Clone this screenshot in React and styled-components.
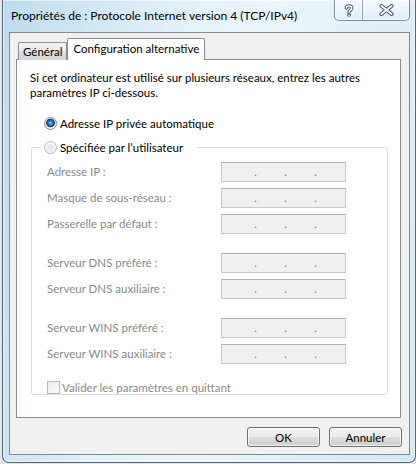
import React from "react";
import styled, { createGlobalStyle } from "styled-components";

const GlobalStyle = createGlobalStyle`
  html, body { margin: 0; padding: 0; }
  body {
    width: 416px;
    height: 464px;
    overflow: hidden;
    background: #dfe8ee;
    font-family: Lato, "Noto Sans", sans-serif;
    font-size: 12px;
    color: #000;
  }
  * { box-sizing: border-box; }
`;

const Window = styled.div`
  margin-left: 2px;
  width: 414px;
  height: 463px;
  border: 1px solid #59636d;
  border-top: none;
  border-radius: 0 0 7px 7px;
  background: linear-gradient(100deg, #bcdcef 0%, #e2f1fa 35%, #eaf5fb 55%, #d3e9f6 100%);
  box-shadow: inset 0 0 0 1px rgba(255, 255, 255, 0.55);
  padding: 0 5px 7px 6px;
  display: flex;
  flex-direction: column;
`;

const TitleBar = styled.div`
  height: 32px;
  display: flex;
  justify-content: space-between;
  align-items: flex-start;
  padding-left: 2px;
`;

const Title = styled.div`
  margin-top: 8px;
  line-height: 16px;
  white-space: nowrap;
`;

const CaptionGroup = styled.div`
  margin-top: -1px;
  height: 22px;
  display: flex;
  border: 1px solid rgba(60, 72, 84, 0.6);
  border-top: none;
  border-radius: 0 0 5px 5px;
  background: linear-gradient(180deg, rgba(255, 255, 255, 0.7), rgba(255, 255, 255, 0.25) 60%, rgba(220, 236, 246, 0.5));
  box-shadow: inset 0 0 0 1px rgba(255, 255, 255, 0.55);
  overflow: hidden;
`;

const CaptionButton = styled.div`
  width: ${(p) => p.$w}px;
  height: 100%;
  display: flex;
  align-items: center;
  justify-content: center;
  border-right: ${(p) => (p.$divider ? "1px solid rgba(60, 72, 84, 0.45)" : "none")};
  padding-top: 1px;
`;

const Client = styled.div`
  flex: 1;
  border: 1px solid #838b94;
  background: #f0f0f0;
  display: flex;
  flex-direction: column;
  padding: 5px 8px 7px 6px;
  font-size: 11.5px;
`;

const TabStrip = styled.div`
  height: 22px;
  margin-bottom: -1px;
  display: flex;
  align-items: flex-end;
  padding-left: 2px;
`;

const Tab = styled.div`
  height: ${(p) => (p.$active ? 22 : 18)}px;
  padding: 0 ${(p) => (p.$active ? 5 : 4)}px;
  border: 1px solid #898c95;
  border-bottom: none;
  border-radius: 2px 2px 0 0;
  background: ${(p) =>
    p.$active
      ? "#fff"
      : "linear-gradient(180deg, #f3f3f3 0%, #ebebeb 50%, #dedede 50%, #d3d3d3 100%)"};
  position: ${(p) => (p.$active ? "relative" : "static")};
  z-index: ${(p) => (p.$active ? 1 : 0)};
  line-height: ${(p) => (p.$active ? 20 : 17)}px;
  white-space: nowrap;
`;

const Panel = styled.div`
  height: 359px;
  background: #fff;
  border: 1px solid #898c95;
  padding: 10px 12px 0 13px;
  display: flex;
  flex-direction: column;
`;

const Description = styled.p`
  margin: 0;
  line-height: 15px;
`;

const RadioRow = styled.label`
  margin-top: 16px;
  padding-left: 14px;
  height: 14px;
  display: flex;
  align-items: center;
  gap: 3px;
  white-space: nowrap;
`;

const Radio = styled.span`
  flex: none;
  width: 13px;
  height: 13px;
  border-radius: 50%;
  border: 1px solid ${(p) => (p.$checked ? "#7f8b97" : "#b2b6ba")};
  background: ${(p) =>
    p.$checked
      ? "radial-gradient(circle at 50% 45%, #a8dbfb 0, #4a9ae0 1.2px, #1d5a9f 3px, #143f73 4px, #dcdcdc 4.6px, #f2f2f2 5.5px, #ffffff 100%)"
      : "radial-gradient(circle at 50% 50%, #e3e3e3 0, #eeeeee 3px, #f7f7f7 5px, #ffffff 100%)"};
`;

const GroupBox = styled.fieldset`
  margin: 10px 0 0 1px;
  padding: 8px 0 0 10px;
  border: 1px solid #d5dfe5;
  border-radius: 3px;
  min-width: 0;
`;

const Legend = styled.legend`
  padding: 0 14px 0 2px;
  height: 14px;
  display: flex;
  align-items: center;
  gap: 3px;
  white-space: nowrap;
`;

const FieldGrid = styled.div`
  margin-left: 5px;
  display: grid;
  grid-template-columns: 174px 125px;
  row-gap: 6px;
`;

const FieldLabel = styled.div`
  height: 20px;
  line-height: 20px;
  color: #8a8a8a;
  white-space: nowrap;
  margin-top: ${(p) => (p.$gap ? 13 : 0)}px;
`;

const IpBox = styled.div`
  height: 20px;
  margin-top: ${(p) => (p.$gap ? 13 : 0)}px;
  border: 1px solid #c6c9cd;
  border-top-color: #aeb1b5;
  background: #f0f0f0;
  display: flex;
  line-height: 17px;
  color: #777;
`;

const IpDot = styled.span`
  width: 3px;
  text-align: center;
  margin-left: ${(p) => (p.$first ? 32 : 27)}px;
  font-size: 11px;
`;

const CheckRow = styled.label`
  margin: 16px 0 0 5px;
  height: 14px;
  display: flex;
  align-items: center;
  gap: 2px;
  color: #8a8a8a;
  white-space: nowrap;
`;

const CheckBox = styled.span`
  flex: none;
  width: 13px;
  height: 13px;
  border: 1px solid #b6b9bd;
  background: linear-gradient(135deg, #ececec, #fafafa);
`;

const ButtonRow = styled.div`
  margin: 9px -1px 0 0;
  display: flex;
  justify-content: flex-end;
  gap: 9px;
`;

const Button = styled.button`
  width: 73px;
  height: 20px;
  padding: 0;
  border: 1px solid #707070;
  border-radius: 3px;
  background: linear-gradient(180deg, #f2f2f2 0%, #ebebeb 50%, #dddddd 50%, #cfcfcf 100%);
  box-shadow: inset 0 0 0 1px rgba(255, 255, 255, 0.7);
  font: inherit;
  color: #000;
  line-height: 17px;
`;

const HelpIcon = () => (
  <svg width="10" height="13" viewBox="0 0 10 13">
    <path d="M2.3 4 C2.3 1.2 7.7 1.2 7.7 4 C7.7 6.2 5 6 5 8.3" fill="none" stroke="#4a5560" strokeWidth="3.4" strokeLinecap="round" />
    <rect x="3.3" y="9.6" width="3.4" height="3" rx="0.8" fill="#4a5560" />
    <path d="M2.3 4 C2.3 1.2 7.7 1.2 7.7 4 C7.7 6.2 5 6 5 8.3" fill="none" stroke="#ffffff" strokeWidth="1.5" strokeLinecap="round" />
    <rect x="4.2" y="10.4" width="1.6" height="1.4" fill="#ffffff" />
  </svg>
);

const CloseIcon = () => (
  <svg width="15" height="12" viewBox="0 0 15 12">
    <path d="M2.5 2 L12.5 10 M12.5 2 L2.5 10" fill="none" stroke="#4a5560" strokeWidth="4" strokeLinecap="round" />
    <path d="M2.5 2 L12.5 10 M12.5 2 L2.5 10" fill="none" stroke="#ffffff" strokeWidth="2" strokeLinecap="round" />
  </svg>
);

const fields = [
  { label: "Adresse IP :" },
  { label: "Masque de sous-réseau :" },
  { label: "Passerelle par défaut :" },
  { label: "Serveur DNS préféré :", gap: true },
  { label: "Serveur DNS auxiliaire :" },
  { label: "Serveur WINS préféré :", gap: true },
  { label: "Serveur WINS auxiliaire :" },
];

export default function App() {
  return (
    <>
      <GlobalStyle />
      <Window>
        <TitleBar>
          <Title>Propriétés de : Protocole Internet version 4 (TCP/IPv4)</Title>
          <CaptionGroup>
            <CaptionButton $w={28} $divider>
              <HelpIcon />
            </CaptionButton>
            <CaptionButton $w={46}>
              <CloseIcon />
            </CaptionButton>
          </CaptionGroup>
        </TitleBar>
        <Client>
          <TabStrip>
            <Tab>Général</Tab>
            <Tab $active>Configuration alternative</Tab>
          </TabStrip>
          <Panel>
            <Description>
              Si cet ordinateur est utilisé sur plusieurs réseaux, entrez les autres
              <br />
              paramètres IP ci-dessous.
            </Description>
            <RadioRow>
              <Radio $checked />
              Adresse IP privée automatique
            </RadioRow>
            <GroupBox>
              <Legend>
                <Radio />
                Spécifiée par l’utilisateur
              </Legend>
              <FieldGrid>
                {fields.map((f) => (
                  <React.Fragment key={f.label}>
                    <FieldLabel $gap={f.gap}>{f.label}</FieldLabel>
                    <IpBox $gap={f.gap}>
                      <IpDot $first>.</IpDot>
                      <IpDot>.</IpDot>
                      <IpDot>.</IpDot>
                    </IpBox>
                  </React.Fragment>
                ))}
              </FieldGrid>
              <CheckRow>
                <CheckBox />
                Valider les paramètres en quittant
              </CheckRow>
            </GroupBox>
          </Panel>
          <ButtonRow>
            <Button>OK</Button>
            <Button>Annuler</Button>
          </ButtonRow>
        </Client>
      </Window>
    </>
  );
}
